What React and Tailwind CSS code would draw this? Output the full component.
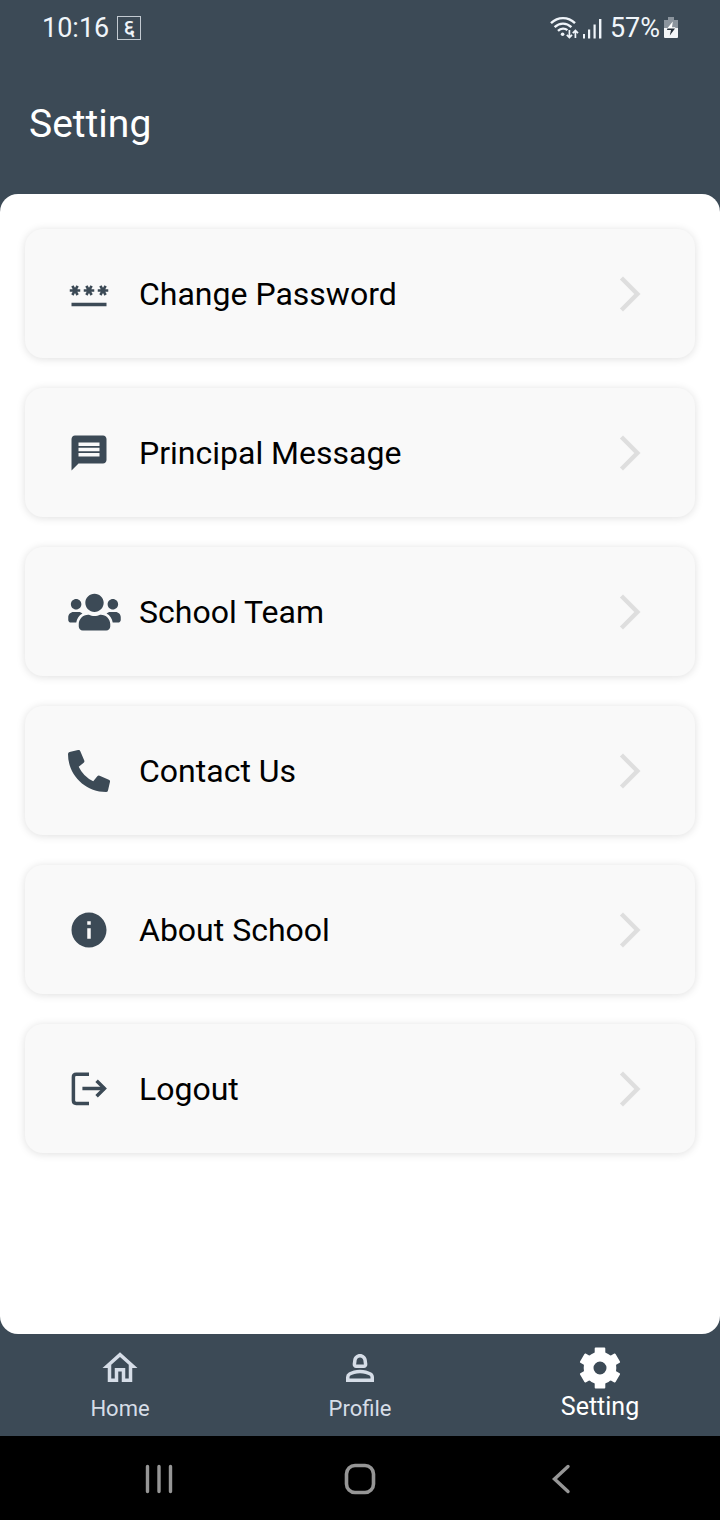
import { FaUsers, FaPhoneAlt } from "react-icons/fa";
import {
  MdArrowForwardIos,
  MdInfo,
  MdMessage,
  MdOutlineHome,
  MdOutlinePerson2,
  MdPassword,
} from "react-icons/md";

function LogoutIcon({ className }) {
  return (
    <svg viewBox="0 0 42 42" fill="none" stroke="currentColor" strokeWidth="3.5" className={className} aria-hidden="true">
      <path d="M21 6.2H8.2Q5.4 6.2 5.4 9V32.6Q5.4 35.4 8.2 35.4H21" />
      <path d="M14.4 20.5H37" />
      <path d="M28.6 12.8L36.4 20.5L28.6 28.2" />
    </svg>
  );
}

function GearIcon({ className }) {
  const teeth = [0, 60, 120, 180, 240, 300];
  return (
    <svg viewBox="-21 -21 42 42" className={className} aria-hidden="true">
      <circle r="11.4" fill="none" stroke="currentColor" strokeWidth="9.8" />
      {teeth.map((angle) => (
        <path
          key={angle}
          d="M-6 -14L-5.3 -15.6V-19.6Q-5.3 -20.5 -4.4 -20.5H4.4Q5.3 -20.5 5.3 -19.6V-15.6L6 -14Z"
          transform={`rotate(${angle})`}
          fill="currentColor"
        />
      ))}
    </svg>
  );
}

function WifiIcon() {
  return (
    <svg viewBox="0 0 29 24" fill="none" stroke="currentColor" className="h-6 w-[29px]" aria-hidden="true">
      <path d="M1 7.2C8 .4 18 .4 25 7.2" strokeWidth="2.4" />
      <path d="M4.6 11.2C9.6 6.4 16.4 6.4 21.4 11.2" strokeWidth="2.4" />
      <path d="M8 14.8C11 12 15 12 17.4 14.2" strokeWidth="2.4" />
      <circle cx="12.6" cy="18.2" r="1.8" fill="currentColor" stroke="none" />
      <path d="M19.4 14V21.4M16.8 18.8L19.4 21.6L22 18.8M25.4 22V14.6M22.8 17.2L25.4 14.4L28 17.2" strokeWidth="1.7" />
    </svg>
  );
}

function SignalIcon() {
  return (
    <svg viewBox="0 0 19 21" fill="currentColor" className="h-[21px] w-[19px]" aria-hidden="true">
      <rect x="0" y="16" width="2" height="4.5" />
      <rect x="5" y="11.5" width="2.2" height="9" />
      <rect x="10.5" y="6.5" width="2.2" height="14" />
      <rect x="16" y="1" width="2.4" height="19.5" />
    </svg>
  );
}

function BatteryIcon() {
  return (
    <svg viewBox="0 0 14 22" className="h-[22px] w-[14px]" aria-hidden="true">
      <path d="M4 0H10V3H14V11H0V3H4Z" fill="#8b949d" />
      <path d="M0 11H14V20Q14 21 13 21H1Q0 21 0 20Z" fill="#f4f6f8" />
      <path d="M8.8 4.6L3 11.8H11L11.4 10.2H8Z" fill="#fff" />
      <path d="M3.4 11.6H11L5.8 18.4L7 13H3Z" fill="#26303a" />
    </svg>
  );
}

const items = [
  { label: "Change Password", Icon: MdPassword, size: "size-[42px]" },
  { label: "Principal Message", Icon: MdMessage, size: "size-[42px]" },
  { label: "School Team", Icon: FaUsers, size: "h-[42px] w-[53px]" },
  { label: "Contact Us", Icon: FaPhoneAlt, size: "size-[42px]" },
  { label: "About School", Icon: MdInfo, size: "size-[42px]" },
  { label: "Logout", Icon: LogoutIcon, size: "size-[42px]" },
];

function SettingCard({ label, Icon, size }) {
  return (
    <li>
      <button
        type="button"
        className="flex h-[129px] w-full items-center rounded-[18px] bg-[#f9f9f9] pr-11 pl-[43px] text-left shadow-[0_1px_8px_rgba(0,0,0,0.13)]"
      >
        <span className="flex w-[71px] shrink-0 text-[#3c4a56]">
          <Icon className={size} />
        </span>
        <span className="flex-1 text-[32px] leading-10 text-black">{label}</span>
        <MdArrowForwardIos className="size-[42px] text-[#dedede]" />
      </button>
    </li>
  );
}

export default function App() {
  return (
    <div className="flex min-h-screen flex-col bg-[#3c4a56] font-['Roboto','Noto_Sans',sans-serif]">
      <div className="flex h-14 items-center justify-between px-[42px] text-[27px] leading-8 text-[#f0f5fa]">
        <div className="flex items-center gap-2">
          <span>10:16</span>
          <span className="flex size-6 items-center justify-center border border-[#c3cad1] text-[23px] leading-5 font-medium">६</span>
        </div>
        <div className="flex items-center gap-1">
          <WifiIcon />
          <SignalIcon />
          <span className="pl-1">57%</span>
          <BatteryIcon />
        </div>
      </div>

      <header className="flex h-[138px] items-center px-[29px] pb-[2px]">
        <h1 className="text-[39px] leading-[48px] text-white">Setting</h1>
      </header>

      <main className="flex-1 rounded-[18px] bg-white px-[25px] py-[35px]">
        <ul className="flex flex-col gap-[30px]">
          {items.map((item) => (
            <SettingCard key={item.label} {...item} />
          ))}
        </ul>
      </main>

      <nav className="grid h-[102px] grid-cols-3 text-[#d6dde7]">
        <a href="#home" className="flex flex-col items-center gap-[6px] pt-[13px] text-[22px] leading-7">
          <MdOutlineHome className="size-[42px]" />
          Home
        </a>
        <a href="#profile" className="flex flex-col items-center gap-[6px] pt-[13px] text-[22px] leading-7">
          <MdOutlinePerson2 className="size-[42px]" />
          Profile
        </a>
        <a href="#setting" aria-current="page" className="flex flex-col items-center gap-1 pt-[13px] text-[25px] leading-7 text-white">
          <GearIcon className="size-[42px]" />
          Setting
        </a>
      </nav>

      <div className="flex h-21 items-center justify-around bg-black px-[57px] pt-[2px] text-[#969696]">
        <button type="button" aria-label="Recent apps">
          <svg viewBox="0 0 30 30" className="size-[30px]" fill="none" stroke="currentColor" strokeWidth="3.4" strokeLinecap="round">
            <path d="M4.5 2.5V27.5M16 2.5V27.5M27.5 2.5V27.5" />
          </svg>
        </button>
        <button type="button" aria-label="Home screen">
          <svg viewBox="0 0 32 32" className="size-8" fill="none" stroke="currentColor" strokeWidth="3.6">
            <rect x="2.5" y="2.5" width="27" height="27" rx="8.5" />
          </svg>
        </button>
        <button type="button" aria-label="Back">
          <svg viewBox="0 0 30 30" className="size-[30px]" fill="none" stroke="currentColor" strokeWidth="3.4" strokeLinecap="round">
            <path d="M21 2.5L7.5 15L21 27.5" />
          </svg>
        </button>
      </div>
    </div>
  );
}
